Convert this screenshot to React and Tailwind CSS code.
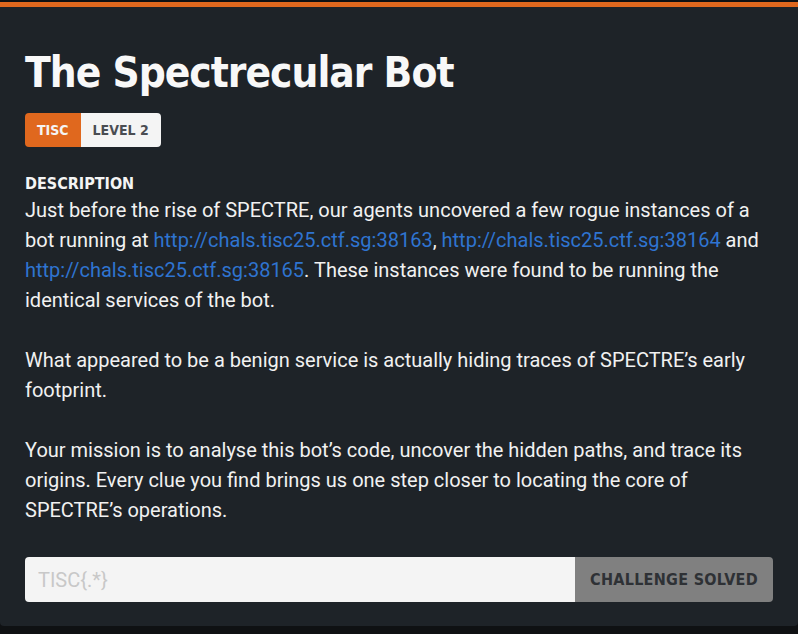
export default function App() {
  const link = "text-[#2f74d0]"
  const head = "font-['DejaVu_Sans_Condensed',sans-serif] font-bold"
  return (
    <div className="min-h-[634px] bg-[#0f1113] pt-[2px]">
      <div className="rounded-b-[4px] border-t-[5px] border-[#e0681e] bg-[#1e2328] px-[25px] pb-[24px] pt-[36px]">
        <h1 className={`${head} text-[42px] leading-[60px] tracking-[-1px] text-[#f8f8f8]`}>The Spectrecular Bot</h1>
        <div className={`${head} mt-[10px] flex h-[34px] w-fit overflow-hidden rounded-[4px] text-[14px]`}>
          <span className="flex items-center bg-[#e0681e] px-[12px] text-[#f4f4f4]">TISC</span>
          <span className="flex items-center bg-[#f4f4f4] px-[12px] text-[#4a4d52]">LEVEL 2</span>
        </div>
        <h2 className={`${head} mt-[26px] text-[16px] leading-[22px] text-[#f4f4f4]`}>DESCRIPTION</h2>
        <div className="font-['Roboto',sans-serif] text-[20px] leading-[30px] text-[#f1f1f1]">
          <p>
            Just before the rise of SPECTRE, our agents uncovered a few rogue instances of a bot running at{" "}
            <a className={link} href="#">http://chals.tisc25.ctf.sg:38163</a>,{" "}
            <a className={link} href="#">http://chals.tisc25.ctf.sg:38164</a> and{" "}
            <a className={link} href="#">http://chals.tisc25.ctf.sg:38165</a>. These instances were found to be running
            the identical services of the bot.
          </p>
          <p className="mt-[30px]">
            What appeared to be a benign service is actually hiding traces of SPECTRE’s early footprint.
          </p>
          <p className="mt-[30px]">
            Your mission is to analyse this bot’s code, uncover the hidden paths, and trace its origins. Every clue you
            find brings us one step closer to locating the core of SPECTRE’s operations.
          </p>
        </div>
        <div className="mt-[32px] flex h-[45px]">
          <input
            className="min-w-0 flex-1 rounded-l-[4px] bg-[#f4f4f4] px-[13px] font-['Roboto',sans-serif] text-[20px] text-[#333] outline-none placeholder:text-[#c8c8c8]"
            placeholder="TISC{.*}"
          />
          <button className={`${head} w-[198px] rounded-r-[4px] bg-[#808080] text-[16px] tracking-[0.3px] text-[#2e3135]`}>
            CHALLENGE SOLVED
          </button>
        </div>
      </div>
    </div>
  )
}
